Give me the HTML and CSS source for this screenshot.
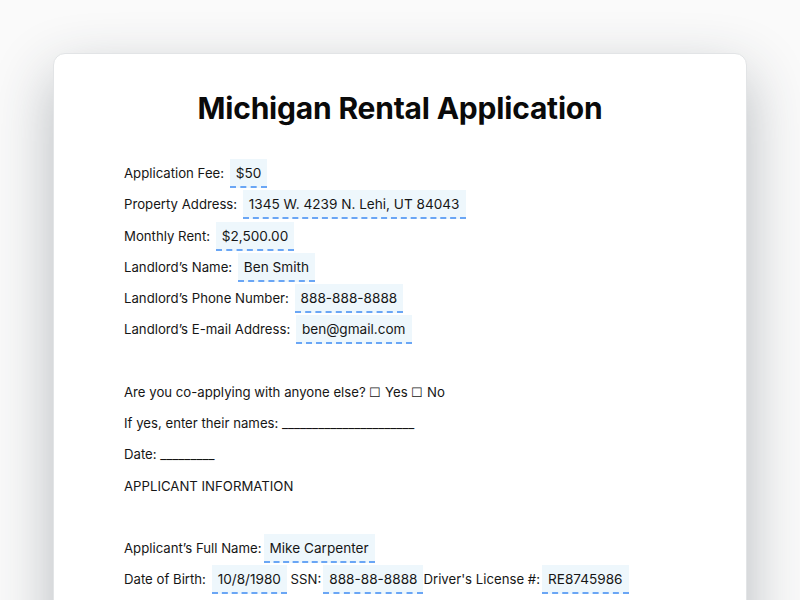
FILE: index.html
```html
<!DOCTYPE html>
<html lang="en">
  <head>
    <meta charset="UTF-8" />
    <meta name="viewport" content="width=device-width, initial-scale=1.0" />
    <title>Michigan Rental Application</title>
    <link rel="stylesheet" href="styles.css">
  </head>
  <body>
    <div class="page">
      <div class="doc">
        <h1>Michigan Rental Application</h1>

        <p>Application Fee: <span class="field">$50</span></p>
        <p>Property Address: <span class="field">1345 W. 4239 N. Lehi, UT 84043</span></p>
        <p>Monthly Rent: <span class="field">$2,500.00</span></p>
        <p>Landlord’s Name: <span class="field">Ben Smith</span></p>
        <p>Landlord’s Phone Number: <span class="field">888-888-8888</span></p>
        <p>Landlord’s E-mail Address: <span class="field">ben@gmail.com</span></p>
        <p>&nbsp;</p>
        <p>Are you co-applying with anyone else? ☐ Yes ☐ No</p>
        <p>If yes, enter their names: ______________________</p>
        <p>Date: _________</p>
        <p>APPLICANT INFORMATION</p>
        <p>&nbsp;</p>
        <p>Applicant’s Full Name:<span class="field">Mike Carpenter</span></p>
        <p>Date of Birth: <span class="field">10/8/1980</span> SSN:<span class="field">888-88-8888</span>Driver's License #:<span class="field">RE8745986</span></p>
      </div>
    </div>
  </body>
</html>
```

FILE: styles.css
```css
body {
  font-family: "Inter", "Liberation Sans", sans-serif;
  margin: 0;
  padding: 0;
  background-color: #fafafa;
  color: #161616;
}

.page {
  padding: 53px 53px 0;
  height: 600px;
  box-sizing: border-box;
  overflow: hidden;
}

.doc {
  background-color: #fff;
  border: 1px solid #e2e4e6;
  border-radius: 12px;
  box-shadow: 0 22px 60px rgba(40, 52, 64, 0.32);
  padding: 30px 70px 40px;
  min-height: 700px;
}

h1 {
  text-align: center;
  font-size: 30px;
  font-weight: 700;
  color: #0a0a0a;
  margin: 6px 0 32px;
  letter-spacing: -0.2px;
}

p {
  margin: 0;
  font-size: 13.2px;
  line-height: 31.25px;
}

/* filled-in values */
.field {
  display: inline-block;
  background-color: #eef7fc;
  border-bottom: 2px dashed #6aa6f5;
  padding: 4px 6px 3px;
  margin-left: 2px;
  font-size: 13.6px;
  line-height: 20px;
}
```
